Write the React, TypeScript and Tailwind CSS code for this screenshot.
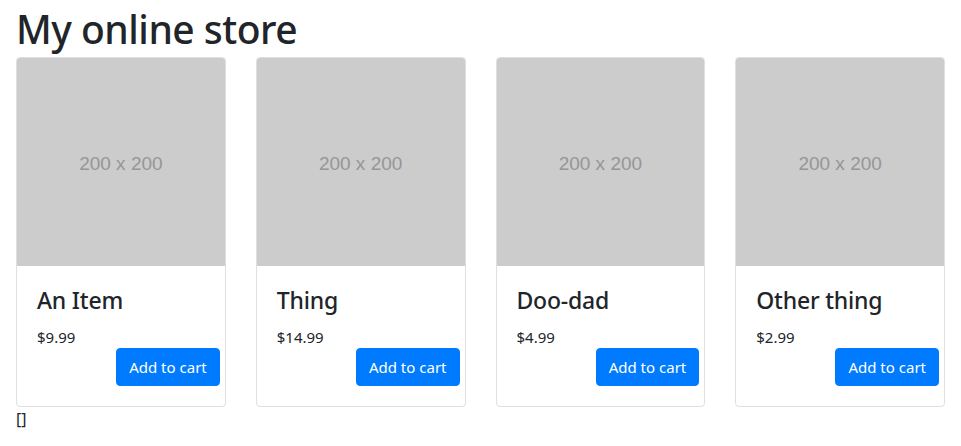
import React from "react";

const items = [
  { name: "An Item", price: "$9.99" },
  { name: "Thing", price: "$14.99" },
  { name: "Doo-dad", price: "$4.99" },
  { name: "Other thing", price: "$2.99" },
];

function Placeholder() {
  return (
    <div className="flex h-[208px] w-full items-center justify-center rounded-t-[3px] bg-[#cccccc] pt-[4px]">
      <span className="font-['Liberation_Sans',Arial,sans-serif] text-[19px] text-[#969696]">200 x 200</span>
    </div>
  );
}

function ProductCard({ name, price }: { name: string; price: string }) {
  return (
    <div className="flex w-[210px] flex-col rounded border border-[#dfdfdf] bg-white">
      <Placeholder />
      <div className="flex flex-col p-5">
        <h3 className="text-[23px] leading-[28px] font-medium tracking-[-0.2px] text-[#212529]">{name}</h3>
        <p className="mt-[12px] text-[15px] leading-[1.5] text-[#212529]">{price}</p>
        <div className="-mt-[1px] flex justify-end">
          <button className="-mr-[15px] rounded border border-[#007bff] bg-[#007bff] px-3 py-[6px] text-[15px] leading-[24px] text-white">
            Add to cart
          </button>
        </div>
      </div>
    </div>
  );
}

export default function App() {
  return (
    <div className="min-h-screen bg-white px-4 font-['Noto_Sans','Open_Sans',sans-serif] text-[#212529]">
      <h1 className="pt-[5px] mb-[4px] text-[39px] leading-[48px] font-medium tracking-[-0.5px]">My online store</h1>
      <div className="flex gap-[30px]">
        {items.map((item) => (
          <ProductCard key={item.name} name={item.name} price={item.price} />
        ))}
      </div>
      <div className="text-[16px] leading-[1.5]">[]</div>
    </div>
  );
}
